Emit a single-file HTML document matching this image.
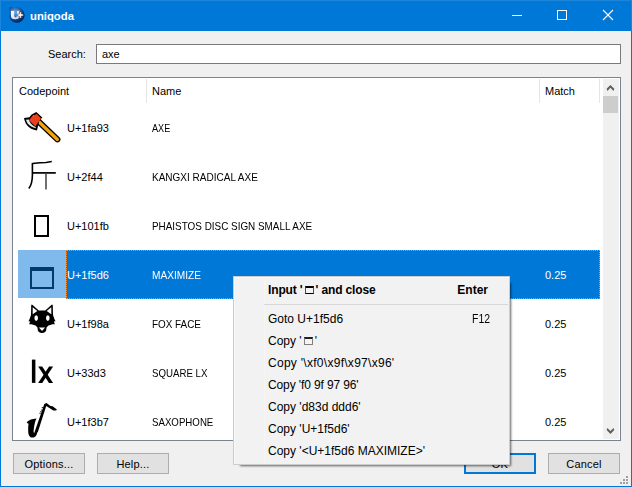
<!DOCTYPE html>
<html><head><meta charset="utf-8">
<style>
*{box-sizing:border-box;margin:0;padding:0}
html,body{width:632px;height:487px;overflow:hidden;background:#F0F0F0;font-family:"Liberation Sans",sans-serif;font-size:11px;color:#000;position:relative}
.a{position:absolute;white-space:nowrap}
.t{position:absolute;white-space:nowrap;line-height:13px;height:13px}
.sx{display:inline-block;transform-origin:0 0}
#title{left:0;top:0;width:632px;height:31px;background:#0078D7}
#bl{left:0;top:31px;width:1px;height:456px;background:#0078D7}
#br{left:631px;top:31px;width:1px;height:456px;background:#0078D7}
#bb{left:0;top:486px;width:632px;height:1px;background:#0078D7}
#search{left:96px;top:44px;width:525px;height:20px;background:#fff;border:1px solid #7A7A7A}
#list{left:12px;top:77px;width:609px;height:364px;background:#fff;border:1px solid #7A8490}
#clip{left:13px;top:78px;width:590px;height:362px;overflow:hidden}
#inner{position:absolute;left:-13px;top:-78px;width:632px;height:487px}
.hdiv{position:absolute;top:79px;width:1px;height:24px;background:#E5E5E5}
.btn{position:absolute;top:453px;height:21px;background:#E1E1E1;border:1px solid #ADADAD;text-align:center;line-height:21px;letter-spacing:0.2px}
#menu{left:233px;top:276px;width:277px;height:189px;background:#F2F2F2;border:1px solid #CCCCCC;box-shadow:inset 1px 1px 0 #F8F8F8}
#msh{left:240px;top:283px;width:271px;height:183px;background:rgba(0,0,0,0.6);filter:blur(1px)}
.mi{position:absolute;left:268px;white-space:nowrap;font-size:12px;line-height:14px;height:14px}
svg{position:absolute;overflow:visible}
</style></head><body>
<div class="a" id="title"></div>
<div class="a" style="left:0;top:0;width:632px;height:1px;background:#1C84DA"></div><div class="a" style="left:0;top:0;width:1px;height:31px;background:#1C84DA"></div><div class="a" style="left:631px;top:0;width:1px;height:31px;background:#1C84DA"></div>
<div class="a" id="bl"></div><div class="a" id="br"></div><div class="a" id="bb"></div>
<!-- app icon -->
<svg style="left:0;top:0" width="32" height="31" viewBox="0 0 32 31">
  <defs>
    <radialGradient id="ig" cx="0.38" cy="0.32" r="0.75">
      <stop offset="0" stop-color="#58AEF4"/><stop offset="0.35" stop-color="#2A72C6"/><stop offset="0.7" stop-color="#0C3A86"/><stop offset="1" stop-color="#041A40"/>
    </radialGradient>
    <linearGradient id="ug" x1="0" y1="0" x2="1" y2="1"><stop offset="0" stop-color="#FFFFFF"/><stop offset="1" stop-color="#D8D0C8"/></linearGradient>
  </defs>
  <path d="M9.1 7.3L17 7.3A7.75 7.75 0 1 1 9.1 15.1Z" fill="url(#ig)"/>
  <path d="M11 9.9H14.2V15.8Q14.2 17.4 15.6 17.4Q16.9 17.4 16.9 15.8V9.9H19.3V16Q19.3 19.2 15.4 19.2Q11 19.2 11 16Z" fill="url(#ug)"/>
  <path d="M19.4 12H21.3V14.1H23.2V16H21.3V18H19.4V16H17.5V14.1H19.4Z" fill="#fff" stroke="#3A3A3A" stroke-width="0.5"/><rect x="11" y="9.9" width="3.2" height="1" fill="#8C7464"/><rect x="16.9" y="9.9" width="2.4" height="1" fill="#8C7464"/>
</svg>
<div class="t" style="left:30px;top:10px;color:#fff;font-weight:bold;font-size:11.3px">uniqoda</div>
<!-- window controls -->
<div class="a" style="left:512px;top:15px;width:10px;height:1px;background:#fff"></div>
<div class="a" style="left:557px;top:10px;width:10px;height:10px;border:1px solid #fff"></div>
<svg style="left:602px;top:9px" width="12" height="12" viewBox="0 0 12 12"><path d="M1 1L11 11M11 1L1 11" stroke="#fff" stroke-width="1.1" fill="none"/></svg>

<div class="t" style="left:48px;top:48px">Search:</div>
<div class="a" id="search"><div class="t" style="left:5px;top:3px">axe</div></div>

<div class="a" id="list"></div>
<div class="a" id="clip"><div id="inner">
  <div class="t" style="left:19px;top:85px">Codepoint</div>
  <div class="hdiv" style="left:146px"></div>
  <div class="t" style="left:152px;top:85px">Name</div>
  <div class="hdiv" style="left:539px"></div>
  <div class="t" style="left:545px;top:85px">Match</div>
  <div class="hdiv" style="left:599px"></div>

  <!-- row1 axe -->
  <svg style="left:16px;top:106px" width="50" height="42" viewBox="0 0 50 42">
    <path d="M22.3 15.3L41.4 33.4" stroke="#000" stroke-width="6" stroke-linecap="round"/>
    <path d="M22.3 15.3L41.4 33.4" stroke="#F0A30A" stroke-width="3.4" stroke-linecap="round"/>
    <path d="M8 12.1L13.4 11.2L15.6 8.4L20.3 5.9L26.3 11.4L23.2 15L21 24.4L18 23.8C14 22.5 11.5 20.5 9.8 17.5C8.8 15.5 8.2 13.8 8 12.1Z" fill="#000"/>
    <path d="M20.8 8L25 12.3L19.3 20.4L13 14.3L16.6 9.8Z" fill="#E8401C"/>
    <path d="M10 13.8L12.8 13.6C13.5 16.5 16 19.8 19.6 21L19.8 22.2C16.5 21.6 13.5 19.8 11.6 17.5C10.8 16.2 10.3 15 10 13.8Z" fill="#E4E8EA"/>
    <path d="M16.6 9.8L18 9.2L17.6 10.6Z" fill="#F0A30A"/>
  </svg>
  <div class="t" style="left:67px;top:122px">U+1fa93</div>
  <div class="t" style="left:152px;top:122px"><span class="sx" style="transform:scaleX(0.83)">AXE</span></div>

  <!-- row2 kangxi -->
  <svg style="left:16px;top:155px" width="50" height="42" viewBox="0 0 50 42">
    <path d="M16.4 8.6L24 7.8L30 7.4L35.8 6.6" stroke="#000" stroke-width="1.5" fill="none"/>
    <path d="M16.4 8L16.4 20C16.4 26 15.5 30 12.8 33.6" stroke="#000" stroke-width="1.6" fill="none"/>
    <path d="M16.8 17.9L39.8 17.9" stroke="#000" stroke-width="1.7" fill="none"/>
    <path d="M30 19L30 34.6" stroke="#222" stroke-width="1.3" fill="none"/>
  </svg>
  <div class="t" style="left:67px;top:171px">U+2f44</div>
  <div class="t" style="left:152px;top:171px"><span class="sx" style="transform:scaleX(0.91)">KANGXI RADICAL AXE</span></div>

  <!-- row3 phaistos -->
  <div class="a" style="left:34px;top:215px;width:15px;height:22px;border:2px solid #000"></div>
  <div class="t" style="left:67px;top:220px">U+101fb</div>
  <div class="t" style="left:152px;top:220px"><span class="sx" style="transform:scaleX(0.9)">PHAISTOS DISC SIGN SMALL AXE</span></div>

  <!-- row4 selected -->
  <div class="a" style="left:18px;top:250px;width:48px;height:48px;background:#80B9EB"></div>
  <div class="a" style="left:66px;top:250px;width:534px;height:49px;background:#0078D7;border:1px dotted #FF8A28"></div>
  <div class="a" style="left:30px;top:267px;width:24px;height:22px;border:2px solid #003A6C;border-top-width:4px"></div>
  <div class="t" style="left:67px;top:269px;color:#fff">U+1f5d6</div>
  <div class="t" style="left:152px;top:269px;color:#fff"><span class="sx" style="transform:scaleX(0.92)">MAXIMIZE</span></div>
  <div class="t" style="left:545px;top:269px;color:#fff">0.25</div>

  <!-- row5 fox -->
  <svg style="left:16px;top:302px" width="50" height="42" viewBox="0 0 50 42">
    <path d="M15.2 3.4Q15.5 2.1 16.6 2.9L22.8 8.6L29.2 8.6L35.4 2.9Q36.5 2.1 36.8 3.4L37 13L38.3 16.8L39.5 19.2L37.8 19.6L38.9 22.2L36.5 22.2L32.5 23.6L30.5 25.5L21.5 25.5L19.5 23.6L15.5 22.2L13.1 22.2L14.2 19.6L12.5 19.2L13.7 16.8L15 13Z" fill="#000"/>
    <path d="M16.7 5.3L16.7 12.3L21.3 9.1Z" fill="#fff"/>
    <path d="M35.3 5.3L35.3 12.3L30.7 9.1Z" fill="#fff"/>
    <ellipse cx="20.2" cy="16.1" rx="1.8" ry="2.8" fill="#fff"/>
    <ellipse cx="31.8" cy="16.1" rx="1.8" ry="2.8" fill="#fff"/>
    <path d="M21.6 24.5L30.4 24.5L30.4 27C30.4 29.5 28.4 31 26 31C23.6 31 21.6 29.5 21.6 27Z" fill="#000"/>
    <path d="M22.9 25.5L29.1 25.5L26 28.9Z" fill="#fff"/>
  </svg>
  <div class="t" style="left:67px;top:318px">U+1f98a</div>
  <div class="t" style="left:152px;top:318px"><span class="sx" style="transform:scaleX(0.9)">FOX FACE</span></div>

  <!-- row6 lx -->
  <svg style="left:16px;top:351px" width="50" height="42" viewBox="0 0 50 42">
    <rect x="15.9" y="8.6" width="3.5" height="23.3" fill="#000"/>
    <path d="M22.2 15.5L26.2 15.5L37.1 31.9L33 31.9Z" fill="#000"/>
    <path d="M33.1 15.5L37.1 15.5L26.2 31.9L22.1 31.9Z" fill="#000"/>
  </svg>
  <div class="t" style="left:67px;top:367px">U+33d3</div>
  <div class="t" style="left:152px;top:367px"><span class="sx" style="transform:scaleX(0.88)">SQUARE LX</span></div>

  <!-- row7 sax -->
  <svg style="left:16px;top:398px" width="50" height="42" viewBox="0 0 50 42">
    <path d="M28.4 5.8L30.7 6.4L21.8 34.2L18.4 34.6Z" fill="#000"/>
    <path d="M29 5.4L30.5 5.1L34.5 8.1L36.6 8.2L40.9 11.6L40.1 12.6L37.4 12.4L33.8 10.3L29.8 7.8Z" fill="#000"/>
    <path d="M10.7 24.5C12 22.3 16 20.6 20.6 20.4L19.6 22.5C18.6 25 18 29 17.6 33C17.5 34.5 17.8 35 18.6 34.6L21.4 33C21.2 36.5 19.8 39.6 16.6 39.6C13.5 39.6 12.3 37 12.2 33C12.1 29.5 12.3 27 12.6 25.8C11.9 25.4 11.2 25 10.7 24.5Z" fill="#000"/>
    <path d="M23.4 15.3h1.4M24.2 13.7h1.4M25 12.1h1.4M25.7 9.6h1.4" stroke="#222" stroke-width="1"/>
  </svg>
  <div class="t" style="left:67px;top:416px">U+1f3b7</div>
  <div class="t" style="left:152px;top:416px"><span class="sx" style="transform:scaleX(0.88)">SAXOPHONE</span></div>
  <div class="t" style="left:545px;top:416px">0.25</div>
  <div class="t" style="left:545px;top:318px">0.25</div>
  <div class="t" style="left:545px;top:367px">0.25</div>
</div></div>

<!-- scrollbar -->
<div class="a" style="left:603px;top:79px;width:16px;height:360px;background:#F0F0F0"></div>
<svg style="left:603px;top:78px" width="17" height="17" viewBox="0 0 17 17"><path d="M3.6 10.8L7.45 7L11.3 10.8L10.5 12.9L7.45 9.85L4.4 12.9Z" fill="#606060"/></svg>
<div class="a" style="left:603px;top:96px;width:15px;height:17px;background:#CDCDCD"></div>
<svg style="left:603px;top:422px" width="17" height="17" viewBox="0 0 17 17"><path d="M3.6 8.1L7.45 11.9L11.3 8.1L10.5 6L7.45 9.05L4.4 6Z" fill="#606060"/></svg>

<div class="btn" style="left:13px;width:72px">Options...</div>
<div class="btn" style="left:97px;width:72px">Help...</div>
<div class="btn" style="left:464px;width:72px;border:2px solid #0078D7;line-height:19px">OK</div>
<div class="btn" style="left:548px;width:72px">Cancel</div>
<!-- size grip -->
<svg style="left:618px;top:474px" width="12" height="12" viewBox="0 0 12 12" fill="#A0A0A0">
  <rect x="8" y="2" width="2" height="2"/><rect x="5" y="5" width="2" height="2"/><rect x="8" y="5" width="2" height="2"/>
  <rect x="2" y="8" width="2" height="2"/><rect x="5" y="8" width="2" height="2"/><rect x="8" y="8" width="2" height="2"/>
</svg>

<div class="a" id="msh"></div>
<div class="a" id="menu"></div>
<div class="a" style="left:264px;top:277px;width:1px;height:187px;background:#F5F5F5"></div>
<div class="a" style="left:264px;top:304px;width:244px;height:1px;background:#D7D7D7"></div>
<div class="mi" style="top:283px;font-weight:bold;letter-spacing:-0.14px">Input '<span style="display:inline-block;width:9px;height:8px;border:1px solid #505050;border-top:2px solid #000;border-bottom-color:#000;margin:0 2px 0 2px;vertical-align:0;background:#F4F4F4"></span>' and close</div>
<div class="mi" style="top:283px;left:408px;width:80px;text-align:right;font-weight:bold">Enter</div>
<div class="mi" style="top:312px">Goto U+1f5d6</div>
<div class="mi" style="top:312px;left:472px"><span class="sx" style="transform:scaleX(0.87)">F12</span></div>
<div class="mi" style="top:334px">Copy '<span style="display:inline-block;width:9px;height:8px;border:1px solid #808080;border-top:2px solid #202020;margin:0 2px 0 2px;vertical-align:0;background:#F4F4F4"></span>'</div>
<div class="mi" style="top:356px;letter-spacing:0.28px">Copy '\xf0\x9f\x97\x96'</div>
<div class="mi" style="top:378px;letter-spacing:-0.12px">Copy 'f0 9f 97 96'</div>
<div class="mi" style="top:400px">Copy 'd83d ddd6'</div>
<div class="mi" style="top:422px">Copy 'U+1f5d6'</div>
<div class="mi" style="top:444px">Copy '&lt;U+1f5d6 MAXIMIZE&gt;'</div>
</body></html>
